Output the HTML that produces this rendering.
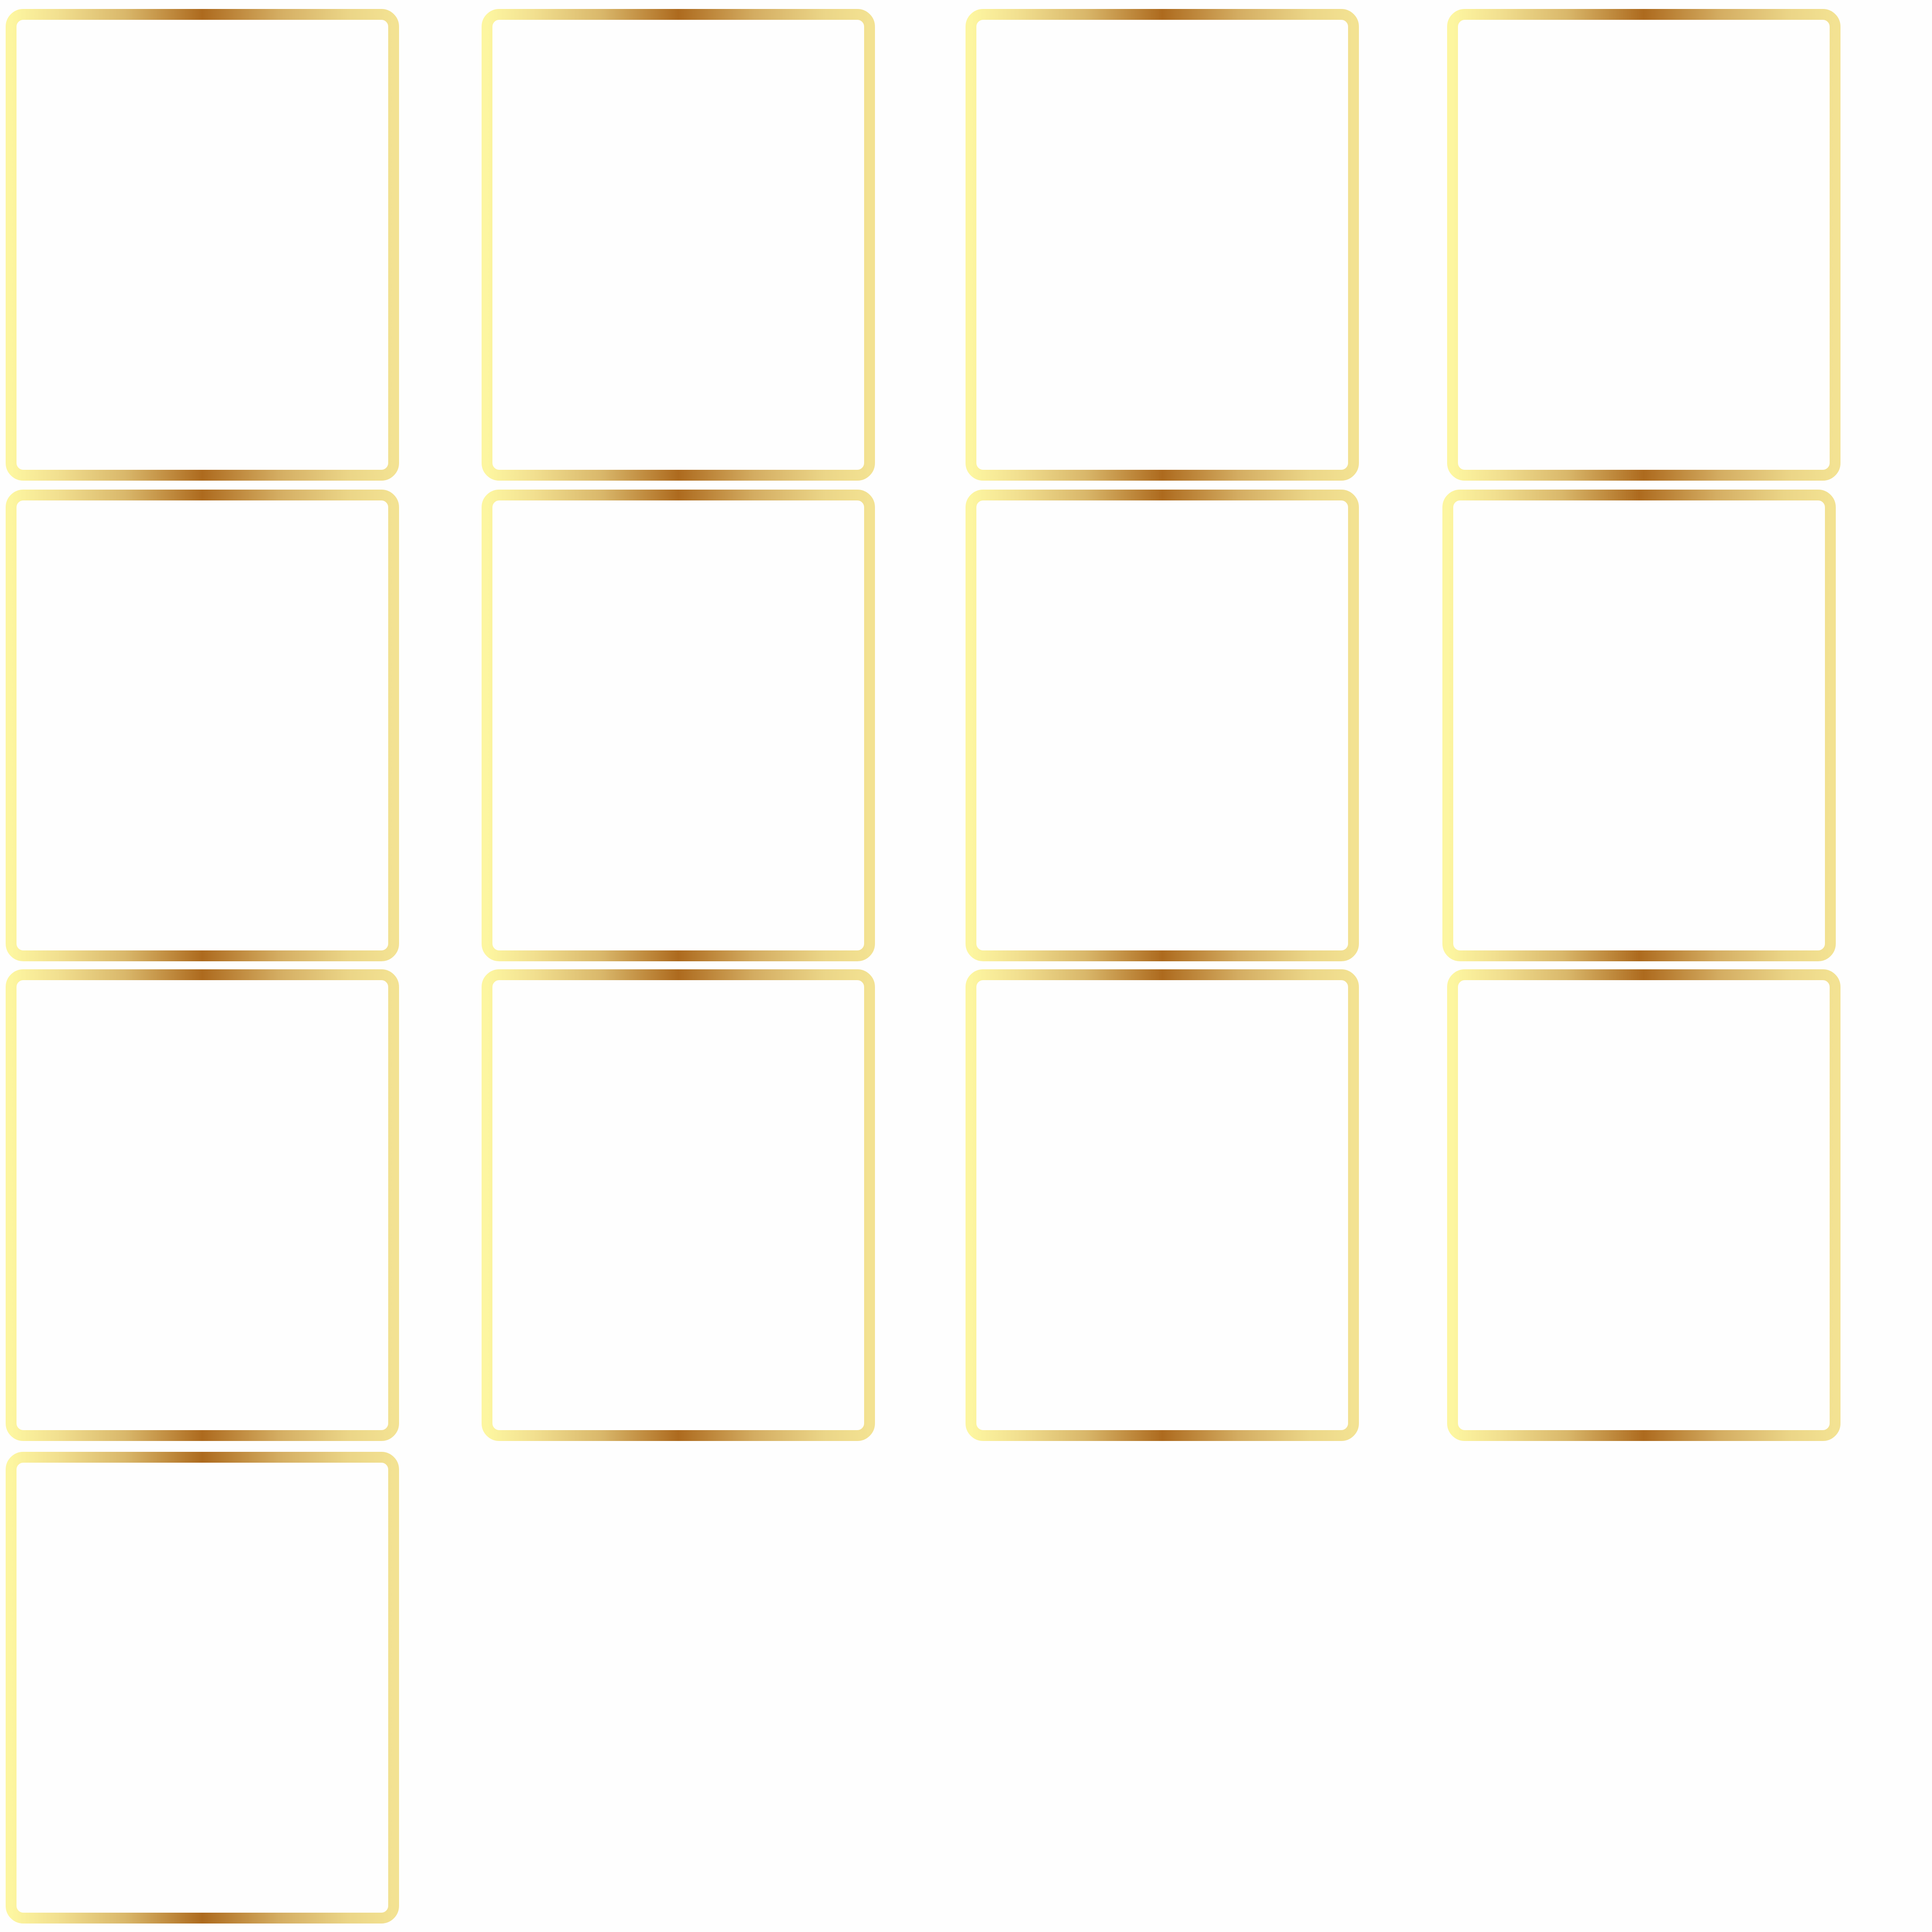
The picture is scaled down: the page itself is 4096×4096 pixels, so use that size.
<!DOCTYPE html>
<html><head><style>
html,body{margin:0;padding:0;background:#fefefe;width:4096px;height:4096px;overflow:hidden}
svg{position:absolute;left:0;top:0}
</style></head><body>
<svg width="4096" height="4096" viewBox="0 0 4096 4096" xmlns="http://www.w3.org/2000/svg">
<defs>
<linearGradient id="g" x1="0" y1="0" x2="1" y2="0" gradientUnits="objectBoundingBox">
<stop offset="0" stop-color="#fdf6a0"/>
<stop offset="0.12" stop-color="#f2e090"/>
<stop offset="0.3" stop-color="#d9b76a"/>
<stop offset="0.5" stop-color="#ad6a1e"/>
<stop offset="0.7" stop-color="#d4ad62"/>
<stop offset="0.88" stop-color="#ebd587"/>
<stop offset="1" stop-color="#f3e292"/>
</linearGradient>
<symbol id="f" viewBox="0 0 834 1000">
<rect x="11.5" y="11.5" width="811" height="977" rx="26" ry="26" fill="none" stroke="url(#g)" stroke-width="23"/>
</symbol>
</defs>
<use href="#f" x="12" y="19" width="834" height="1000"/>
<use href="#f" x="1021" y="19" width="834" height="1000"/>
<use href="#f" x="2047" y="19" width="834" height="1000"/>
<use href="#f" x="3068" y="19" width="834" height="1000"/>

<use href="#f" x="12" y="1038" width="834" height="1000"/>
<use href="#f" x="1021" y="1038" width="834" height="1000"/>
<use href="#f" x="2047" y="1038" width="834" height="1000"/>
<use href="#f" x="3058" y="1038" width="834" height="1000"/>

<use href="#f" x="12" y="2055" width="834" height="1000"/>
<use href="#f" x="1021" y="2055" width="834" height="1000"/>
<use href="#f" x="2047" y="2055" width="834" height="1000"/>
<use href="#f" x="3068" y="2055" width="834" height="1000"/>

<use href="#f" x="12" y="3078" width="834" height="1000"/>
</svg>
</body></html>
